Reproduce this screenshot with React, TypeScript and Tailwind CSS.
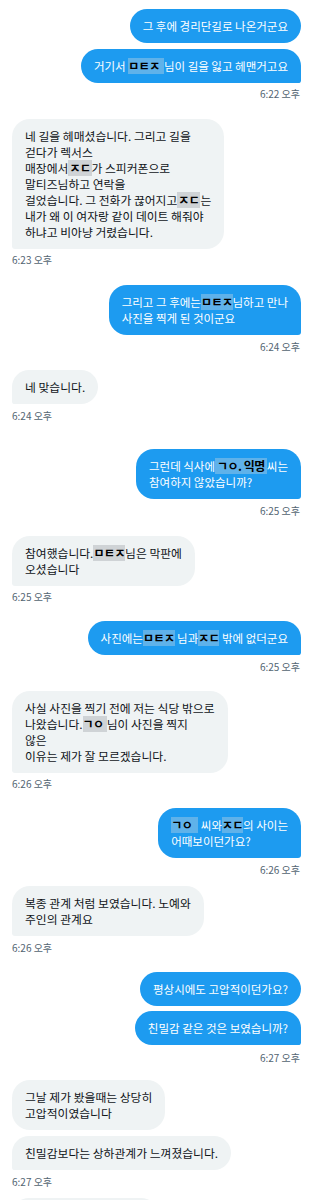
import React from "react";

const font = { fontFamily: '"Noto Sans CJK KR", "Noto Sans", sans-serif' };

function RB({ className = "", children }: { className?: string; children: React.ReactNode }) {
  return (
    <div className="flex justify-end">
      <div
        className={
          "bg-[#1d9bf0] text-white text-[11.5px] leading-[16px] px-[13px] py-[9px] rounded-[18px] whitespace-nowrap " +
          className
        }
      >
        {children}
      </div>
    </div>
  );
}

function LB({ className = "", children }: { className?: string; children: React.ReactNode }) {
  return (
    <div className="flex justify-start">
      <div
        className={
          "bg-[#eff3f4] text-[#0f1419] text-[11.8px] leading-[16px] px-[13px] py-[9px] rounded-[18px] whitespace-nowrap " +
          className
        }
      >
        {children}
      </div>
    </div>
  );
}

function TS({ right, className = "", children }: { right?: boolean; className?: string; children: React.ReactNode }) {
  return (
    <div
      className={
        "text-[10px] leading-[12px] text-[#536471] " + (right ? "text-right pr-px " : "text-left ") + className
      }
    >
      {children}
    </div>
  );
}

function RD({ onBlue, className = "", children }: { onBlue?: boolean; className?: string; children: React.ReactNode }) {
  return (
    <span
      className={
        "inline-block align-top h-[16px] text-black font-semibold text-[12px] leading-[16px] tracking-[-0.5px] " +
        (onBlue ? "bg-[#5fb2ea] " : "bg-[#cfd3d6] ") +
        className
      }
    >
      {children}
    </span>
  );
}

export default function App() {
  return (
    <div className="w-[313px] h-[1200px] overflow-hidden bg-white px-[12px] pt-[9px]" style={font}>
      {/* G1 */}
      <RB>그 후에 경리단길로 나온거군요</RB>
      <RB className="mt-[6px] rounded-br-[3px]">
        거기서 <RD onBlue className="pr-[4px]">ㅁㅌㅈ</RD>님이 길을 잃고 헤맨거고요
      </RB>
      <TS right className="mt-[5px]">6:22 오후</TS>

      {/* G2 */}
      <div className="mt-[19px]">
        <LB className="rounded-bl-[3px]">
          네 길을 헤매셨습니다. 그리고 길을
          <br />
          걷다가 렉서스
          <br />
          매장에서<RD className="px-[1px]">ㅈㄷ</RD>가 스피커폰으로
          <br />
          말티즈님하고 연락을
          <br />
          걸었습니다. 그 전화가 끊어지고<RD className="px-[1px]">ㅈㄷ</RD>는
          <br />
          내가 왜 이 여자랑 같이 데이트 해줘야
          <br />
          하냐고 비아냥 거렸습니다.
        </LB>
        <TS className="mt-[5px]">6:23 오후</TS>
      </div>

      {/* G3 */}
      <div className="mt-[19px]">
        <RB className="rounded-br-[3px]">
          그리고 그 후에는<RD onBlue>ㅁㅌㅈ</RD>님하고 만나
          <br />
          사진을 찍게 된 것이군요
        </RB>
        <TS right className="mt-[6px]">6:24 오후</TS>
      </div>

      {/* G4 */}
      <div className="mt-[17px]">
        <LB className="rounded-bl-[3px]">네 맞습니다.</LB>
        <TS className="mt-[6px]">6:24 오후</TS>
      </div>

      {/* G5 */}
      <div className="mt-[27px]">
        <RB className="rounded-br-[3px]">
          그런데 식사에<RD onBlue className="px-[2px]">ㄱㅇ. 익명</RD>씨는
          <br />
          참여하지 않았습니까?
        </RB>
        <TS right className="mt-[6px]">6:25 오후</TS>
      </div>

      {/* G6 */}
      <div className="mt-[19px]">
        <LB className="rounded-bl-[3px]">
          참여했습니다.<RD>ㅁㅌㅈ</RD>님은 막판에
          <br />
          오셨습니다
        </LB>
        <TS className="mt-[5px]">6:25 오후</TS>
      </div>

      {/* G7 */}
      <div className="mt-[18px]">
        <RB className="rounded-br-[3px]">
          사진에는<RD onBlue>ㅁㅌㅈ</RD> 님과<RD onBlue>ㅈㄷ</RD> 밖에 없더군요
        </RB>
        <TS right className="mt-[6px]">6:25 오후</TS>
      </div>

      {/* G8 */}
      <div className="mt-[18px]">
        <LB className="rounded-bl-[3px]">
          사실 사진을 찍기 전에 저는 식당 밖으로
          <br />
          나왔습니다.<RD className="pr-[3px]">ㄱㅇ</RD>님이 사진을 찍지
          <br />
          않은
          <br />
          이유는 제가 잘 모르겠습니다.
        </LB>
        <TS className="mt-[5px]">6:26 오후</TS>
      </div>

      {/* G9 */}
      <div className="mt-[18px]">
        <RB className="rounded-br-[3px]">
          <RD onBlue className="pr-[6px]">ㄱㅇ</RD> 씨와<RD onBlue>ㅈㄷ</RD>의 사이는
          <br />
          어때보이던가요?
        </RB>
        <TS right className="mt-[6px]">6:26 오후</TS>
      </div>

      {/* G10 */}
      <div className="mt-[10px]">
        <LB className="rounded-bl-[3px]">
          복종 관계 처럼 보였습니다. 노예와
          <br />
          주인의 관계요
        </LB>
        <TS className="mt-[6px]">6:26 오후</TS>
      </div>

      {/* G11 */}
      <div className="mt-[18px]">
        <RB>평상시에도 고압적이던가요?</RB>
        <RB className="mt-[5px] rounded-br-[3px]">친밀감 같은 것은 보였습니까?</RB>
        <TS right className="mt-[7px]">6:27 오후</TS>
      </div>

      {/* G12 */}
      <div className="mt-[16px]">
        <LB>
          그날 제가 봤을때는 상당히
          <br />
          고압적이였습니다
        </LB>
        <LB className="mt-[6px] rounded-bl-[3px]">친밀감보다는 상하관계가 느껴졌습니다.</LB>
        <TS className="mt-[6px]">6:27 오후</TS>
      </div>

      {/* G13 partial */}
      <div className="mt-[10px]">
        <div className="w-[146px] h-[34px] rounded-[18px] bg-[#eff3f4]" />
      </div>
    </div>
  );
}
